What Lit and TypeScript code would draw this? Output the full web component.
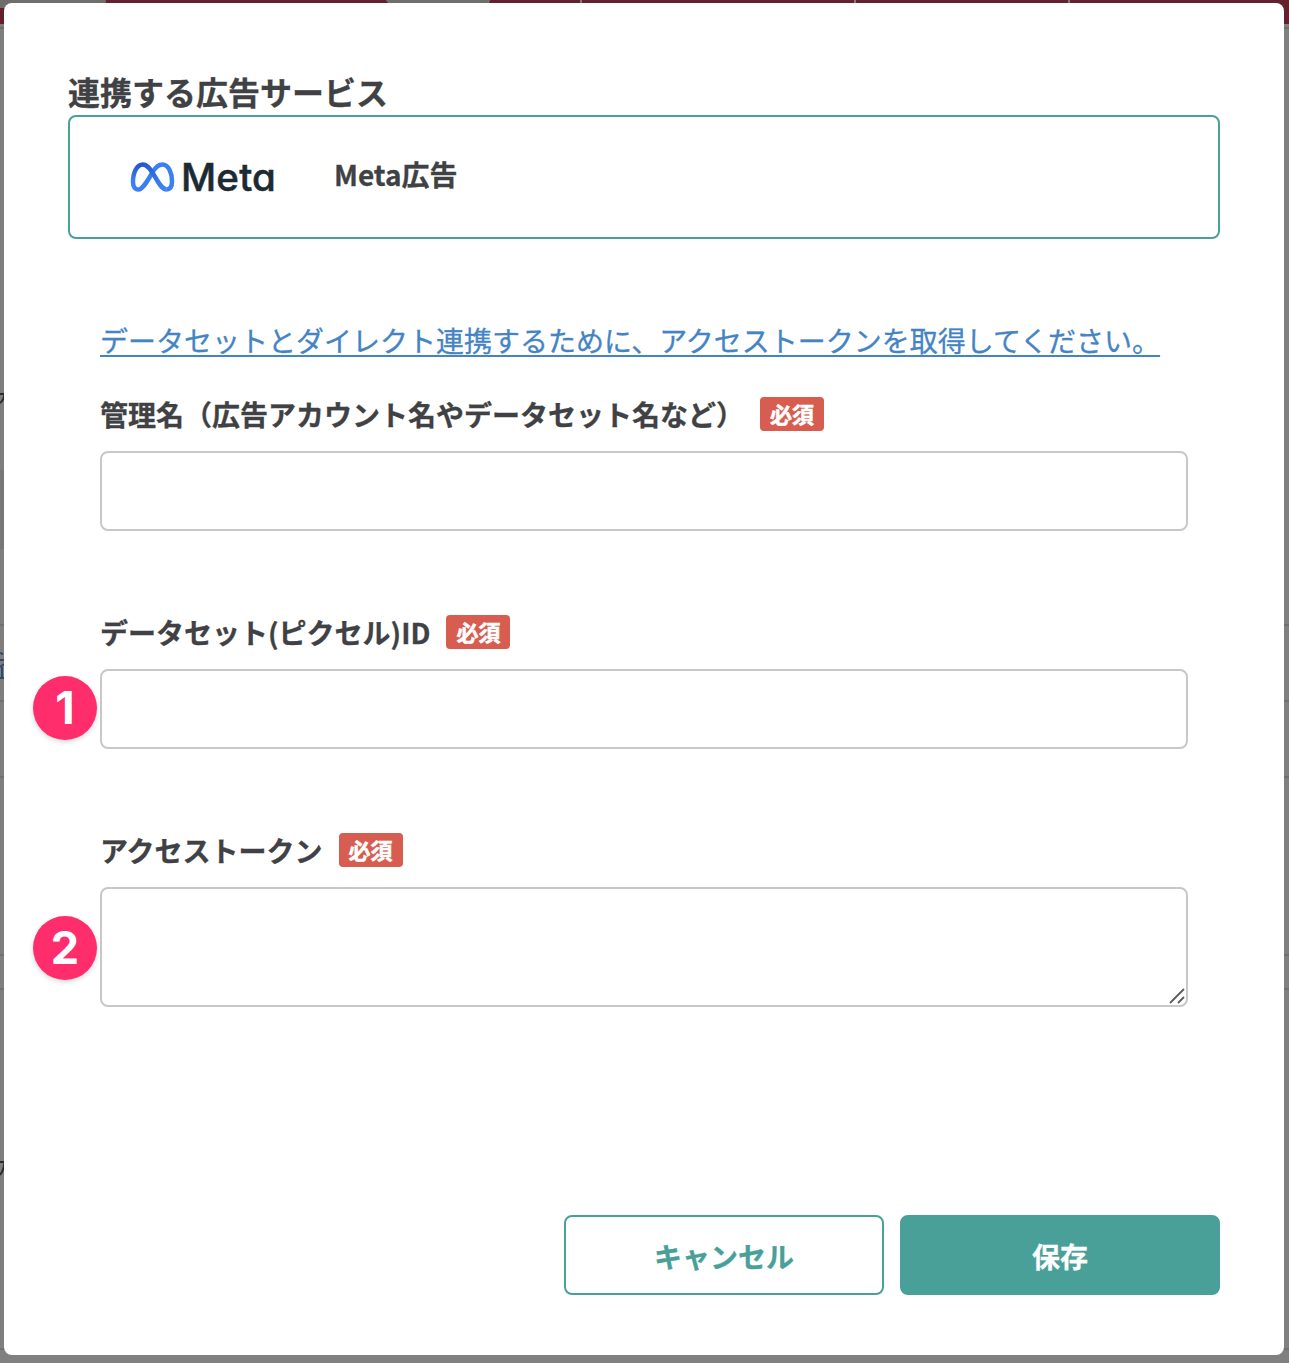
import { LitElement, html, css, svg, nothing } from "lit";
import { customElement, property } from "lit/decorators.js";

@customElement("page-backdrop")
export class PageBackdrop extends LitElement {
  static styles = css`
    :host { display: block; }
    .scene { display: block; width: 100%; height: 100%; }
  `;

  render() {
    return html`<svg class="scene" viewBox="0 0 1289 1363" preserveAspectRatio="none" aria-hidden="true">
      <rect width="1289" height="1363" fill="#808080" />
      <rect width="10" height="1363" fill="#807e7c" />
      <rect y="1345" width="1289" height="18" fill="#808080" />
      <rect y="8" width="1289" height="16" fill="#64202d" />
      <path d="M106 0H386L392 8H104Z M490 0H1289V10H486Z" fill="#64202d" />
      <path d="M386 0H490L486 4H391Z M0 0H106L104 4V8H0Z" fill="#6e6e6d" />
      <path d="M581 0V4M855 0V4M1069 0V4" stroke="#86797a" stroke-width="2" />
      <rect y="27" width="1289" height="2" fill="#6f6f6f" />
      <rect y="470" width="10" height="79" fill="#777777" />
      ${[625, 701, 777, 955, 989, 1349].map(
        (y) => svg`<rect y=${y - 1} width="1289" height="2" fill="#707070" />`
      )}
      <path d="M0 394H4.500Q4 400 0 403M0 1162H4.500Q4 1170 0 1175" fill="none" stroke="#2b2b2b" stroke-width="2" />
      <path d="M0 653L3 654M0 660H4M0 667L4 664M2 667V677" fill="none" stroke="#2c4a6c" stroke-width="2" />
      <rect y="677" width="6" height="2" fill="#2c4a6c" />
    </svg>`;
  }
}

@customElement("meta-logo")
export class MetaLogo extends LitElement {
  static styles = css`
    :host { display: flex; align-items: center; gap: 6px; }
    .mark { display: block; flex: none; }
    .word {
      font: 500 38.5px/44px Inter, sans-serif;
      font-feature-settings: "cv11";
      color: #1c2b33;
      letter-spacing: 0.2px;
      -webkit-text-stroke: 0.5px #1c2b33;
    }
  `;

  render() {
    return html`
      <svg class="mark" width="45" height="30" viewBox="-0.500 0 45 30" aria-hidden="true">
        <defs>
          <linearGradient id="a" x1="0" y1="1" x2="0.300" y2="0">
            <stop offset="0" stop-color="#3b82f6" /><stop offset="1" stop-color="#2458cf" />
          </linearGradient>
          <linearGradient id="b" x1="0" y1="0" x2="1" y2="0.600">
            <stop offset="0" stop-color="#2458cf" /><stop offset="1" stop-color="#3b82f6" />
          </linearGradient>
        </defs>
        <path d="M22 10.500C25 5 28.500 2.500 32 2.500C38 2.500 41.500 11 41.500 19.500C41.500 24.500 39.500 27.500 36 27.500" fill="none" stroke="#3b7ff2" stroke-width="4.500" />
        <path d="M22 10.500C16 20 12.500 27.500 7.800 27.500C4.500 27.500 2.500 24.500 2.500 20" fill="none" stroke="#3b7ff2" stroke-width="4.500" />
        <path d="M2.500 20C2.500 10 6.500 2.500 12.500 2.500" fill="none" stroke="url(#a)" stroke-width="4.500" />
        <path d="M12.300 2.500C22.500 2.500 27 27.500 36.200 27.500" fill="none" stroke="url(#b)" stroke-width="4.500" />
      </svg>
      <span class="word">Meta</span>
    `;
  }
}

@customElement("form-field")
export class FormField extends LitElement {
  @property() label = "";
  @property() marker = "";
  @property({ type: Boolean }) multiline = false;

  static styles = css`
    :host { display: block; }
    .head { display: flex; align-items: center; gap: 16px; height: 40px; }
    .label {
      font-size: 28px; line-height: 40px; font-weight: 700; white-space: nowrap;
      -webkit-text-stroke: 0.3px currentColor;
    }
    .badge {
      box-sizing: border-box; width: 64px; height: 34px; border-radius: 4px;
      background: #d65d4f; color: #fff; text-align: center;
      font-size: 22px; font-weight: 700; line-height: 32px;
      -webkit-text-stroke: 0.5px currentColor;
    }
    .body { position: relative; margin-top: 17px; }
    .control {
      display: block; box-sizing: border-box; width: 100%; height: 80px; margin: 0;
      padding: 12px 16px; border: 2px solid #c8c8cc; border-radius: 8px;
      background: #fff; font: inherit; font-size: 28px; color: inherit; outline: none; resize: none;
    }
    .tall { height: 120px; }
    .grip { position: absolute; right: 3px; bottom: 3px; }
    .marker {
      position: absolute; left: -67px; top: 50%; margin-top: -33px;
      width: 64px; height: 64px; border-radius: 50%;
      background: #ff2d6c; color: #fff; text-align: center;
      font: 700 45px/64px Inter, sans-serif;
      box-shadow: 0 2px 5px rgba(0, 0, 0, 0.16);
    }
    .tall ~ .marker { margin-top: -31px; }
  `;

  render() {
    return html`
      <div class="head">
        <span class="label">${this.label}</span>
        <span class="badge">必須</span>
      </div>
      <div class="body">
        ${this.multiline
          ? html`<textarea class="control tall"></textarea>
              <svg class="grip" width="16" height="16" viewBox="0 0 16 16" aria-hidden="true">
                <path d="M1 15L15 1M9 15L15 9" stroke="#5c5c5c" stroke-width="1.800" />
              </svg>`
          : html`<input class="control" />`}
        ${this.marker ? html`<span class="marker">${this.marker}</span>` : nothing}
      </div>
    `;
  }
}

@customElement("app-root")
export class AppRoot extends LitElement {
  static styles = css`
    :host {
      display: block; position: relative; box-sizing: border-box;
      width: 1289px; height: 1363px; padding: 3px 5px 8px 4px; overflow: hidden;
      font-family: "Noto Sans CJK JP", sans-serif; color: #404144;
    }
    .backdrop { position: absolute; inset: 0; }
    .dialog {
      position: relative; box-sizing: border-box; height: 1352px;
      padding: 65px 64px 60px; border-radius: 8px; background: #fff;
      display: flex; flex-direction: column;
    }
    .title {
      margin: 0; height: 47px; font-size: 32px; line-height: 46px; font-weight: 700;
      -webkit-text-stroke: 0.3px currentColor;
    }
    .service {
      box-sizing: border-box; height: 124px; border: 2px solid #48a099; border-radius: 8px;
      display: flex; align-items: center; padding: 0 60px;
    }
    .logo { width: 204px; }
    .name {
      font-size: 28px; line-height: 40px; font-weight: 700; padding-bottom: 7px;
      -webkit-text-stroke: 0.3px currentColor;
    }
    .form { padding: 0 32px; margin-top: 81px; display: flex; flex-direction: column; }
    .help {
      align-self: flex-start; color: #4584c4; font-size: 28px; line-height: 40px; white-space: nowrap;
      text-decoration: underline; text-decoration-thickness: 2px; text-underline-offset: 3px;
      -webkit-text-stroke: 0.3px currentColor;
      margin-bottom: 34px;
    }
    .fields { display: flex; flex-direction: column; gap: 81px; }
    .actions { display: flex; justify-content: flex-end; gap: 16px; margin-top: auto; }
    .button {
      box-sizing: border-box; width: 320px; height: 80px; border: 2px solid #48a099; border-radius: 8px;
      background: #fff; color: #48a099; font: inherit; font-size: 28px; font-weight: 700; padding: 1px 0 0;
      -webkit-text-stroke: 0.3px currentColor;
    }
    .primary { background: #48a099; color: #fff; }
  `;

  render() {
    return html`
      <page-backdrop class="backdrop"></page-backdrop>
      <section class="dialog" role="dialog">
        <h2 class="title">連携する広告サービス</h2>
        <div class="service">
          <meta-logo class="logo"></meta-logo>
          <span class="name">Meta広告</span>
        </div>
        <div class="form">
          <a class="help" href="#">データセットとダイレクト連携するために、アクセストークンを取得してください。</a>
          <div class="fields">
            <form-field label="管理名（広告アカウント名やデータセット名など）"></form-field>
            <form-field label="データセット(ピクセル)ID" marker="1"></form-field>
            <form-field label="アクセストークン" marker="2" multiline></form-field>
          </div>
        </div>
        <div class="actions">
          <button class="button">キャンセル</button>
          <button class="button primary">保存</button>
        </div>
      </section>
    `;
  }
}
